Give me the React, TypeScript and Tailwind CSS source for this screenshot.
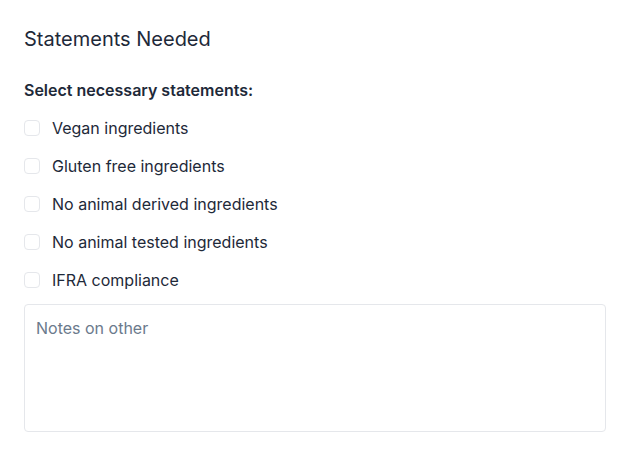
import { useState } from 'react'

const statements = [
  'Vegan ingredients',
  'Gluten free ingredients',
  'No animal derived ingredients',
  'No animal tested ingredients',
  'IFRA compliance',
]

export default function App() {
  const [checked, setChecked] = useState<Record<string, boolean>>({})

  return (
    <div
      className="min-h-screen bg-white px-6 pt-[25px] text-gray-800"
      style={{ fontFamily: 'Inter, "Noto Sans", sans-serif' }}
    >
      <h2 className="text-xl leading-7 font-normal text-gray-800">Statements Needed</h2>

      <div className="mt-[25px] flex flex-col gap-[14px]">
        <p className="text-base leading-6 font-semibold text-gray-800">
          Select necessary statements:
        </p>
        {statements.map((s) => (
          <label key={s} className="flex items-center gap-3 text-base leading-6 text-gray-800">
            <input
              type="checkbox"
              checked={!!checked[s]}
              onChange={() => setChecked({ ...checked, [s]: !checked[s] })}
              className="h-4 w-4 appearance-none rounded-[4px] border border-gray-200 bg-white checked:bg-blue-600"
            />
            {s}
          </label>
        ))}
      </div>

      <textarea
        placeholder="Notes on other"
        className="mt-3 block h-32 w-full resize-none rounded-[4px] border border-gray-200 px-[11px] py-[11px] text-base leading-6 placeholder:text-[#6b7a8c] outline-none"
        style={{ fontFamily: 'Inter, "Noto Sans", sans-serif' }}
      />
    </div>
  )
}
